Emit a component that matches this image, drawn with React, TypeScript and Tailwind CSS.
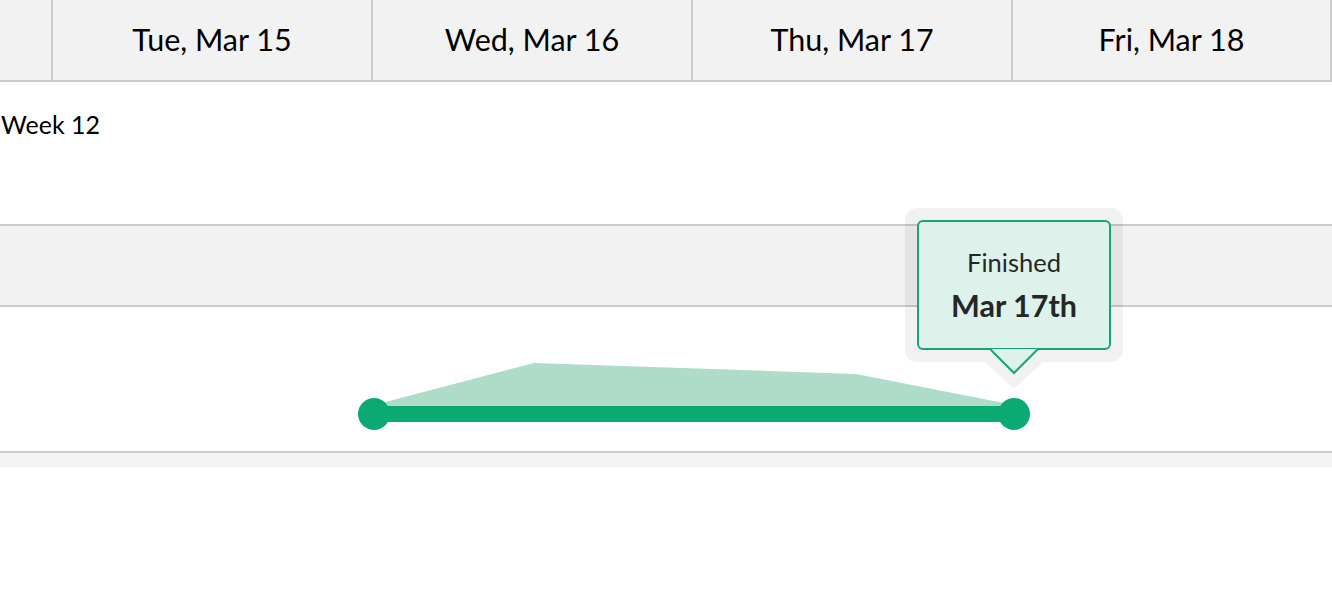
const days = ["Tue, Mar 15", "Wed, Mar 16", "Thu, Mar 17", "Fri, Mar 18"];

function Tooltip() {
  return (
    <div className="absolute left-[905px] top-[208px] w-[218px] h-[182px]">
      <div className="h-[154px] w-full rounded-[12px] bg-black/[0.055] p-[12px]">
        <div className="flex h-[130px] flex-col items-center justify-center rounded-[6px] border-2 border-[#14a673] bg-[#dcf2ea] pb-[2px] text-[#262626]">
          <div className="text-[25.5px] leading-[30px]">Finished</div>
          <div className="mt-[11px] text-[30.5px] font-bold leading-[34px]">Mar 17th</div>
        </div>
      </div>
      <svg className="absolute left-0 top-0" width="218" height="182" viewBox="0 0 218 182">
        <polygon points="80,154 138,154 109,181" fill="rgba(0,0,0,0.055)" />
        <polygon points="85,141 133,141 109,165" fill="#dcf2ea" />
        <polyline points="85,141 109,165 133,141" fill="none" stroke="#14a673" strokeWidth="2" />
      </svg>
    </div>
  );
}

export default function App() {
  return (
    <div className="relative w-[1332px] bg-white font-['Lato',sans-serif] text-black">
      <div className="flex h-[82px] border-b-2 border-[#cccccc] bg-[#f2f2f2]">
        <div className="w-[51px]" />
        {days.map((d, i) => (
          <div
            key={d}
            className={`flex items-center justify-center border-l-2 border-[#cccccc] text-[30.5px] ${
              i === 3 ? "w-[321px] border-r-2" : "w-[320px]"
            }`}
          >
            {d}
          </div>
        ))}
      </div>

      <div className="h-[142px] pt-[27px] pl-[1px] text-[25px] leading-[30px]">Week 12</div>
      <div className="h-[83px] border-y-2 border-[#cccccc] bg-[#f2f2f2]" />

      <div className="h-[146px] border-b-2 border-[#cccccc]">
        <svg width="1332" height="144" viewBox="0 0 1332 144">
          <polygon points="378,97 534,56 856,67 1014,98 1014,106 374,106" fill="#aedcc8" />
          <rect x="374" y="99" width="640" height="16" fill="#0aaa72" />
          <circle cx="374" cy="107" r="16" fill="#0aaa72" />
          <circle cx="1014" cy="107" r="16" fill="#0aaa72" />
        </svg>
      </div>
      <div className="h-[14px] bg-[#f3f3f3]" />
      <div className="h-[130px]" />

      <Tooltip />
    </div>
  );
}
